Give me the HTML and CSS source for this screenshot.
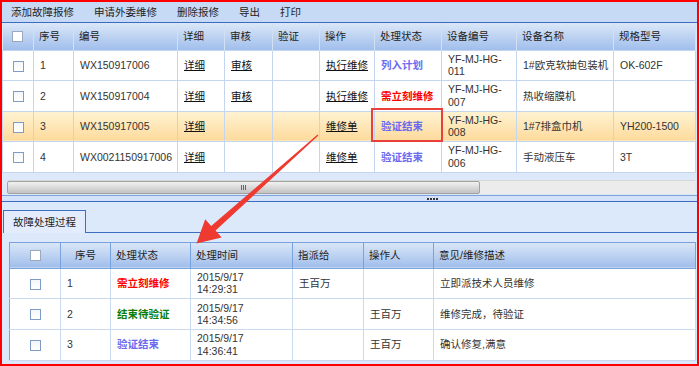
FILE: index.html
```html
<!DOCTYPE html>
<html lang="zh-CN">
<head>
    <meta charset="UTF-8">
    <title>故障报修</title>
    <link rel="stylesheet" href="styles.css">
</head>
<body>
<div class="frame">
    <div class="toolbar">
        <span class="tool">添加故障报修</span>
        <span class="tool">申请外委维修</span>
        <span class="tool">删除报修</span>
        <span class="tool">导出</span>
        <span class="tool">打印</span>
    </div>

    <div class="grid-wrap">
        <table class="grid">
            <colgroup>
                <col style="width:31px"><col style="width:40px"><col style="width:104px">
                <col style="width:47px"><col style="width:48px"><col style="width:47px">
                <col style="width:55px"><col style="width:67px"><col style="width:75px">
                <col style="width:97px"><col style="width:82px">
            </colgroup>
            <thead>
                <tr>
                    <th class="ck"><span class="cb cb-head"></span></th>
                    <th>序号</th><th>编号</th><th>详细</th><th>审核</th><th>验证</th>
                    <th>操作</th><th>处理状态</th><th>设备编号</th><th>设备名称</th><th>规格型号</th>
                </tr>
            </thead>
            <tbody>
                <tr>
                    <td class="ck"><span class="cb"></span></td>
                    <td>1</td><td>WX150917006</td>
                    <td><a class="lnk">详细</a></td><td><a class="lnk">审核</a></td><td></td>
                    <td><a class="lnk">执行维修</a></td>
                    <td><span class="st st-plan">列入计划</span></td>
                    <td class="wrap">YF-MJ-HG-<br>011</td><td>1#欧克软抽包装机</td><td>OK-602F</td>
                </tr>
                <tr>
                    <td class="ck"><span class="cb"></span></td>
                    <td>2</td><td>WX150917004</td>
                    <td><a class="lnk">详细</a></td><td><a class="lnk">审核</a></td><td></td>
                    <td><a class="lnk">执行维修</a></td>
                    <td><span class="st st-urgent">需立刻维修</span></td>
                    <td class="wrap">YF-MJ-HG-<br>007</td><td>热收缩膜机</td><td></td>
                </tr>
                <tr class="selected">
                    <td class="ck"><span class="cb"></span></td>
                    <td>3</td><td>WX150917005</td>
                    <td><a class="lnk">详细</a></td><td></td><td></td>
                    <td><a class="lnk">维修单</a></td>
                    <td><span class="st st-done">验证结束</span></td>
                    <td class="wrap">YF-MJ-HG-<br>008</td><td>1#7排盒巾机</td><td>YH200-1500</td>
                </tr>
                <tr>
                    <td class="ck"><span class="cb"></span></td>
                    <td>4</td><td>WX0021150917006</td>
                    <td><a class="lnk">详细</a></td><td></td><td></td>
                    <td><a class="lnk">维修单</a></td>
                    <td><span class="st st-done">验证结束</span></td>
                    <td class="wrap">YF-MJ-HG-<br>006</td><td>手动液压车</td><td>3T</td>
                </tr>
            </tbody>
        </table>
        <div class="hscroll">
            <div class="thumb"><span class="grip"></span></div>
        </div>
    </div>

    <div class="splitter"><span class="dots"></span></div>

    <div class="panel">
        <div class="tabs">
            <span class="tab">故障处理过程</span>
        </div>
        <table class="sub">
            <colgroup>
                <col style="width:51px"><col style="width:50px"><col style="width:80px">
                <col style="width:102px"><col style="width:71px"><col style="width:70px">
                <col style="width:262px">
            </colgroup>
            <thead>
                <tr>
                    <th class="ck"><span class="cb cb-head"></span></th>
                    <th class="center">序号</th><th>处理状态</th><th>处理时间</th>
                    <th>指派给</th><th>操作人</th><th>意见/维修描述</th>
                </tr>
            </thead>
            <tbody>
                <tr>
                    <td class="ck"><span class="cb"></span></td>
                    <td>1</td>
                    <td><span class="st st-urgent">需立刻维修</span></td>
                    <td class="wrap">2015/9/17<br>14:29:31</td>
                    <td>王百万</td><td></td><td>立即派技术人员维修</td>
                </tr>
                <tr>
                    <td class="ck"><span class="cb"></span></td>
                    <td>2</td>
                    <td><span class="st st-wait">结束待验证</span></td>
                    <td class="wrap">2015/9/17<br>14:34:56</td>
                    <td></td><td>王百万</td><td>维修完成，待验证</td>
                </tr>
                <tr>
                    <td class="ck"><span class="cb"></span></td>
                    <td>3</td>
                    <td><span class="st st-done">验证结束</span></td>
                    <td class="wrap">2015/9/17<br>14:36:41</td>
                    <td></td><td>王百万</td><td>确认修复,满意</td>
                </tr>
            </tbody>
        </table>
    </div>

    <!-- annotation drawn over the screenshot -->
    <svg class="marks" width="699" height="366" viewBox="0 0 699 366">
        <rect x="372" y="109" width="70" height="32" fill="none" stroke="#e8403a" stroke-width="2"/>
        <polygon fill="#ee3a30" points="318.4,135.4 215.6,230.6 221.6,237.4 196.5,243.5 205.2,219.2 211.2,226 317.6,134.6"/>
    </svg>
</div>
</body>
</html>
```

FILE: styles.css
```css
body {
    margin: 0;
    font-family: "Liberation Sans", "Noto Sans CJK SC", sans-serif;
    font-size: 10.5px;
    color: #222;
}
.frame {
    position: relative;
    width: 699px;
    height: 366px;
    box-sizing: border-box;
    border: 2px solid #f00;
    background: #dce8fa;
    overflow: hidden;
}

/* toolbar */
.toolbar {
    display: flex;
    gap: 20px;
    height: 20px;
    align-items: center;
    padding-left: 9px;
    background: #c6daf5;
    border-bottom: 1px solid #3b6cc0;
}
.tool {
    line-height: 13px;
    color: #1e1e1e;
}

/* main grid */
.grid-wrap {
    background: #dde9fb;
}
table {
    border-collapse: collapse;
    table-layout: fixed;
}
.grid {
    width: 693px;
}
th {
    font-weight: normal;
    text-align: left;
    padding: 1px 0 0 5px;
    background: linear-gradient(#dbe7f8, #a0beeb);
    color: #1e1e1e;
    line-height: 13px;
}
td {
    padding: 0 0 0 6px;
    line-height: 12.5px;
    color: #333;
    background: #fff;
    vertical-align: middle;
    white-space: nowrap;
}
.grid thead tr {
    height: 27px;
}
.grid th {
    border-right: 1px solid #d3e0f4;
}
.grid tbody tr {
    height: 30.5px;
}
.grid td {
    border: 1px solid #c3d5ef;
}
.grid tr.selected td {
    background: linear-gradient(#fff3d2, #fdda9c);
}
th.ck, td.ck {
    padding: 0;
    text-align: center;
}
th.center {
    text-align: center;
    padding: 0;
}
.cb {
    display: inline-block;
    width: 9px;
    height: 9px;
    border: 1px solid #7f9cc4;
    background: linear-gradient(#f4f6fa, #fff);
    vertical-align: middle;
}
.cb-head {
    border-color: #9aa9bd;
    background: #fff;
}
.lnk {
    color: #111;
    text-decoration: underline;
}
.st {
    font-weight: bold;
}
.st-plan { color: #6c6cf2; }
.st-urgent { color: #f00; }
.st-done { color: #6a6aef; }
.st-wait { color: #0a7d0a; }

/* horizontal scrollbar */
.hscroll {
    margin: 7px 2px 0 5px;
    height: 14px;
    background: #ececec;
    border-top: 1px solid #d8d8d8;
    box-sizing: border-box;
}
.thumb {
    width: 473px;
    height: 13px;
    box-sizing: border-box;
    border: 1px solid #a2a2a2;
    border-radius: 2px;
    background: linear-gradient(#f1f1f1, #c2c2c2);
    display: flex;
    justify-content: center;
    align-items: center;
}
.grip {
    width: 6px;
    height: 5px;
    background: repeating-linear-gradient(90deg, #666 0 1px, transparent 1px 2px);
}

/* splitter */
.splitter {
    height: 5px;
    margin-top: 1px;
    border-top: 1px solid #7ea3d9;
    border-bottom: 1px solid #3d6cc0;
    background: #d3e2f8;
    position: relative;
}
.dots {
    position: absolute;
    left: 425px;
    top: 2px;
    width: 12px;
    height: 2px;
    background: repeating-linear-gradient(90deg, #333 0 2px, transparent 2px 3px);
}

/* lower panel */
.panel {
    background: #dce9fb;
    padding: 8px 0 0 1px;
}
.tabs {
    display: flex;
    border-bottom: 1px solid #3e6ec0;
    height: 22px;
}
.tab {
    width: 83px;
    height: 23px;
    box-sizing: border-box;
    padding: 5px 0 0 9px;
    border: 1px solid #3e6ec0;
    border-bottom: none;
    background: #e2ecfc;
    line-height: 13px;
    color: #1e1e1e;
    margin-bottom: -1px;
}
.sub {
    margin: 9px 0 0 6px;
    width: 686px;
    border: 1px solid #79a2db;
}
.sub thead tr {
    height: 26px;
}
.sub th {
    border-right: 1px solid #78a3dc;
    border-bottom: 1px solid #78a3dc;
}
.sub tbody tr {
    height: 30.7px;
}
.sub td {
    border-right: 1px solid #cad9f0;
    border-bottom: 1px solid #cad9f0;
}

/* annotation overlay */
.marks {
    position: absolute;
    left: -2px;
    top: -2px;
    pointer-events: none;
}
```
